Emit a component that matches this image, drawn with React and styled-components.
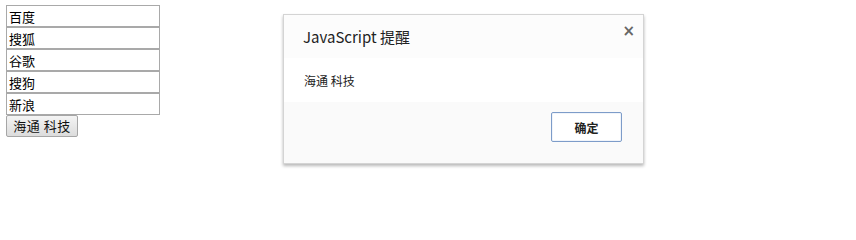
import React from "react";
import styled, { createGlobalStyle } from "styled-components";

const GlobalStyle = createGlobalStyle`
  body {
    margin: 0;
    background: #fff;
    font-family: "Noto Sans CJK SC", "Liberation Sans", sans-serif;
  }
`;

const Page = styled.div`
  position: relative;
  width: 856px;
  height: 212px;
  padding: 5px 0 0 6px;
  box-sizing: border-box;
`;

const Form = styled.div`
  display: flex;
  flex-direction: column;
  align-items: flex-start;
  width: 154px;
`;

const TextBox = styled.input`
  box-sizing: border-box;
  width: 154px;
  height: 22px;
  margin: 0;
  padding: 1px 2px 0;
  border: 1px solid #a9a9a9;
  font-family: "Noto Sans CJK SC", sans-serif;
  font-size: 13px;
  color: #000;
  background: #fff;
  outline: none;
`;

const JoinButton = styled.button`
  box-sizing: border-box;
  width: 72px;
  height: 22px;
  margin: 0;
  padding: 0 0 1px;
  border: 1px solid #a6a6a6;
  border-radius: 2px;
  background: linear-gradient(#f4f4f4, #dcdcdc);
  font-family: "Noto Sans CJK SC", sans-serif;
  font-size: 13px;
  letter-spacing: 0.5px;
  color: #111;
`;

const Alert = styled.div`
  position: absolute;
  left: 283px;
  top: 14px;
  width: 361px;
  height: 150px;
  box-sizing: border-box;
  border: 1px solid #d4d4d4;
  background: #fff;
  box-shadow: 0 2px 3px rgba(0, 0, 0, 0.28);
  display: flex;
  flex-direction: column;
  font-family: "Noto Sans CJK SC", "Liberation Sans", sans-serif;
`;

const AlertHeader = styled.div`
  height: 43px;
  background: #fcfcfc;
  display: flex;
  align-items: flex-start;
  justify-content: space-between;
  padding: 12px 8px 0 19px;
  box-sizing: border-box;
`;

const AlertTitle = styled.div`
  font-size: 15px;
  line-height: 20px;
  color: #222;
`;

const CloseMark = styled.div`
  font-family: "DejaVu Sans", sans-serif;
  font-size: 15px;
  line-height: 14px;
  font-weight: bold;
  color: #666;
  margin-top: -3px;
`;

const AlertBody = styled.div`
  height: 44px;
  background: #fff;
  padding: 15px 0 0 20px;
  box-sizing: border-box;
  font-size: 12px;
  line-height: 16px;
  color: #222;
`;

const AlertFooter = styled.div`
  flex: 1;
  background: #fafafa;
  display: flex;
  justify-content: flex-end;
  align-items: flex-start;
  padding: 10px 21px 0 0;
  box-sizing: border-box;
`;

const OkButton = styled.button`
  box-sizing: border-box;
  width: 71px;
  height: 30px;
  border: 1px solid #7d9cc9;
  border-radius: 2px;
  background: #fff;
  font-family: "Noto Sans CJK SC", sans-serif;
  font-size: 12px;
  font-weight: bold;
  color: #222;
  box-shadow: inset 0 0 0 1px #f0f4fa;
`;

const engines = ["百度", "搜狐", "谷歌", "搜狗", "新浪"];

export default function App() {
  return (
    <>
      <GlobalStyle />
      <Page>
        <Form>
          {engines.map((name) => (
            <TextBox key={name} defaultValue={name} />
          ))}
          <JoinButton>海通 科技</JoinButton>
        </Form>
        <Alert>
          <AlertHeader>
            <AlertTitle>JavaScript 提醒</AlertTitle>
            <CloseMark>×</CloseMark>
          </AlertHeader>
          <AlertBody>海通 科技</AlertBody>
          <AlertFooter>
            <OkButton>确定</OkButton>
          </AlertFooter>
        </Alert>
      </Page>
    </>
  );
}
